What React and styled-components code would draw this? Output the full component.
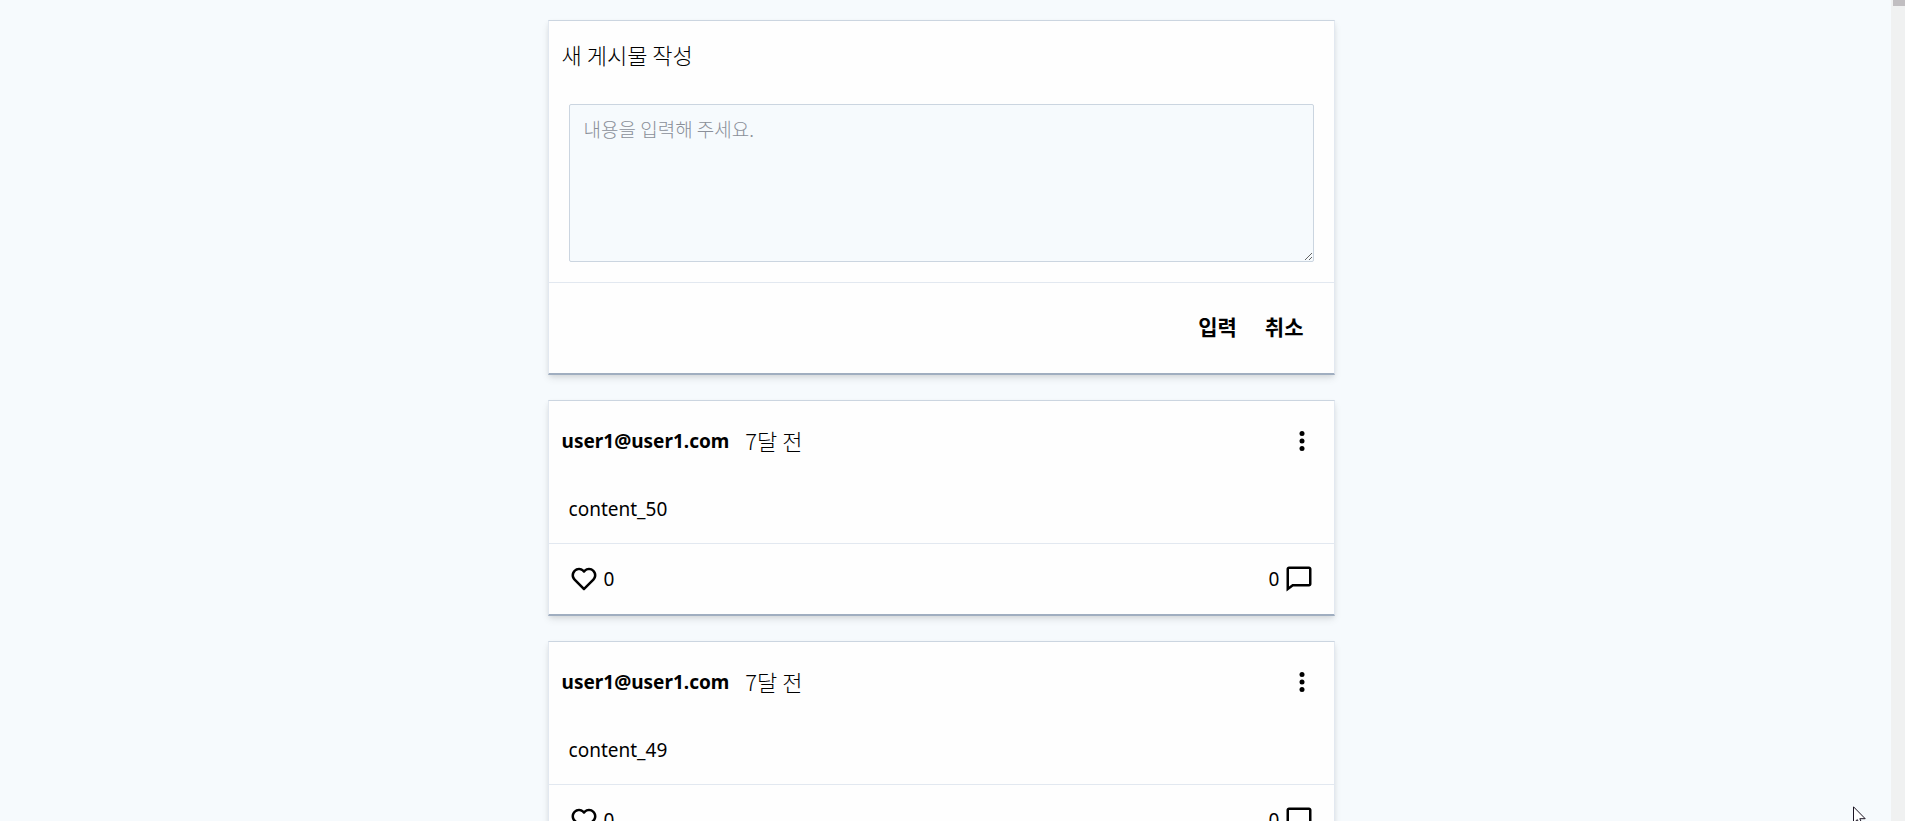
import React from "react";
import styled, { createGlobalStyle } from "styled-components";

const GlobalStyle = createGlobalStyle`
  *, *::before, *::after { box-sizing: border-box; }
  body {
    margin: 0;
    background: #f6fafd;
    color: #000;
    font-family: "Noto Sans", "Noto Sans CJK KR", sans-serif;
    font-size: 19px;
    line-height: 28px;
  }
  button, textarea { font: inherit; color: inherit; }
`;

const Page = styled.div`
  display: flex;
  height: 100vh;
  overflow: hidden;
`;

const Feed = styled.main`
  flex: 1;
  min-width: 0;
  display: flex;
  flex-direction: column;
  align-items: center;
  gap: 25px;
  padding-top: 20px;
`;

const cardStyles = `
  flex: none;
  width: calc(500% / 12);
  margin-right: 8px;
  background: #fefefe;
  border: 1px solid #e2e8f0;
  border-top-color: #cbd5e0;
  border-bottom: 2px solid #a0aec0;
  box-shadow: 0 4px 8px -1px rgba(0, 0, 0, 0.1), 0 2px 5px -1px rgba(0, 0, 0, 0.08);
`;

const ComposeCard = styled.form`
  ${cardStyles}
`;

const PostCard = styled.article`
  ${cardStyles}
`;

const Title = styled.label`
  display: block;
  padding: 19px 13px 0;
  font-family: "Noto Sans CJK KR", sans-serif;
  font-size: 22px;
  font-weight: 300;
`;

const Field = styled.div`
  padding: 36px 20px 20px;
`;

const TextBox = styled.textarea`
  display: block;
  width: 100%;
  height: 158px;
  padding: 10px 14px;
  border: 1px solid #cbd5e0;
  border-radius: 2px;
  background: #f6fafd;
  font-family: "Noto Sans CJK KR", sans-serif;
  font-weight: 300;
  resize: vertical;
  outline: none;

  &::placeholder { color: #8a8f99; opacity: 1; }
`;

const Actions = styled.footer`
  display: flex;
  justify-content: flex-end;
  gap: 28px;
  padding: 28px 31px 32px;
  border-top: 1px solid #e2e8f0;
`;

const TextButton = styled.button`
  height: 30px;
  padding: 0;
  border: 0;
  background: none;
  font-family: "Noto Sans CJK KR", sans-serif;
  font-size: 21px;
  font-weight: 700;
  line-height: 30px;
  cursor: pointer;
`;

const PostHeader = styled.header`
  display: flex;
  align-items: center;
  padding: 25px 17px 0 13px;
`;

const Author = styled.strong`
  line-height: 30px;
`;

const Time = styled.time`
  flex: 1;
  margin-left: 16px;
  font-family: "Noto Sans CJK KR", sans-serif;
  font-size: 22px;
  font-weight: 300;
  line-height: 26px;
  padding-bottom: 2px;
`;

const IconButton = styled.button`
  display: flex;
  padding: 0;
  border: 0;
  background: none;
  cursor: pointer;
`;

const Content = styled.p`
  margin: 0;
  padding: 39px 20px 20px;
`;

const PostFooter = styled.footer`
  display: flex;
  justify-content: space-between;
  padding: 20px;
  border-top: 1px solid #e2e8f0;
`;

const CountButton = styled(IconButton)`
  align-items: center;
  gap: 5px;
  height: 30px;
  line-height: 30px;
`;

const Scrollbar = styled.div`
  flex: none;
  width: 14px;
  background: #f0f1f1;
`;

const Thumb = styled.div`
  height: 6px;
  margin-left: 2px;
  background: #c1bec1;
`;

const Pointer = styled.svg`
  position: fixed;
  right: 38px;
  bottom: -6px;
  pointer-events: none;
`;

function DotsIcon() {
  return (
    <svg width="30" height="30" viewBox="0 0 24 24" fill="currentColor" aria-hidden="true">
      <circle cx="12" cy="6" r="2" />
      <circle cx="12" cy="12" r="2" />
      <circle cx="12" cy="18" r="2" />
    </svg>
  );
}

function HeartIcon() {
  return (
    <svg width="30" height="30" viewBox="0 0 24 24" fill="currentColor" aria-hidden="true">
      <path d="M12 4.595a5.904 5.904 0 0 0-3.996-1.558 5.942 5.942 0 0 0-4.213 1.758c-2.353 2.363-2.352 6.059.002 8.412l7.332 7.332c.17.299.498.492.875.492a.99.99 0 0 0 .792-.409l7.415-7.415c2.354-2.354 2.354-6.049-.002-8.416a5.938 5.938 0 0 0-4.209-1.754A5.906 5.906 0 0 0 12 4.595zm6.791 1.61c1.563 1.571 1.564 4.025.002 5.588L12 18.586l-6.793-6.793c-1.562-1.563-1.561-4.017-.002-5.584.76-.756 1.754-1.172 2.799-1.172s2.035.416 2.789 1.17l.5.5a.999.999 0 0 0 1.414 0l.5-.5c1.512-1.509 4.074-1.505 5.584-.002z" />
    </svg>
  );
}

function CommentIcon() {
  return (
    <svg width="30" height="30" viewBox="0 0 24 24" fill="currentColor" aria-hidden="true">
      <path d="M20 2H4c-1.103 0-2 .897-2 2v18l5.333-4H20c1.103 0 2-.897 2-2V4c0-1.103-.897-2-2-2zm0 14H6.667L4 18V4h16v12z" />
    </svg>
  );
}

function Post({ author, time, content, likes, comments }) {
  return (
    <PostCard>
      <PostHeader>
        <Author>{author}</Author>
        <Time>{time}</Time>
        <IconButton type="button" aria-label="메뉴">
          <DotsIcon />
        </IconButton>
      </PostHeader>
      <Content>{content}</Content>
      <PostFooter>
        <CountButton type="button" aria-label={`좋아요 ${likes}`}>
          <HeartIcon />
          <span>{likes}</span>
        </CountButton>
        <CountButton type="button" aria-label={`댓글 ${comments}`}>
          <span>{comments}</span>
          <CommentIcon />
        </CountButton>
      </PostFooter>
    </PostCard>
  );
}

const posts = [50, 49].map((n) => ({
  id: n,
  author: "user1@user1.com",
  time: "7달 전",
  content: `content_${n}`,
  likes: 0,
  comments: 0,
}));

export default function App() {
  return (
    <Page>
      <GlobalStyle />
      <Feed>
        <ComposeCard onSubmit={(e) => e.preventDefault()}>
          <Title htmlFor="new-post">새 게시물 작성</Title>
          <Field>
            <TextBox id="new-post" placeholder="내용을 입력해 주세요." />
          </Field>
          <Actions>
            <TextButton type="submit">입력</TextButton>
            <TextButton type="reset">취소</TextButton>
          </Actions>
        </ComposeCard>
        {posts.map(({ id, ...post }) => (
          <Post key={id} {...post} />
        ))}
      </Feed>
      <Scrollbar>
        <Thumb />
      </Scrollbar>
      <Pointer width="14" height="21" viewBox="0 0 14 21" aria-hidden="true">
        <path
          d="M.5.8v16.4l3.8-3.6 2.8 6.2 2.4-1.1-2.7-6h5.4z"
          fill="#fff"
          stroke="#1a1322"
        />
      </Pointer>
    </Page>
  );
}
